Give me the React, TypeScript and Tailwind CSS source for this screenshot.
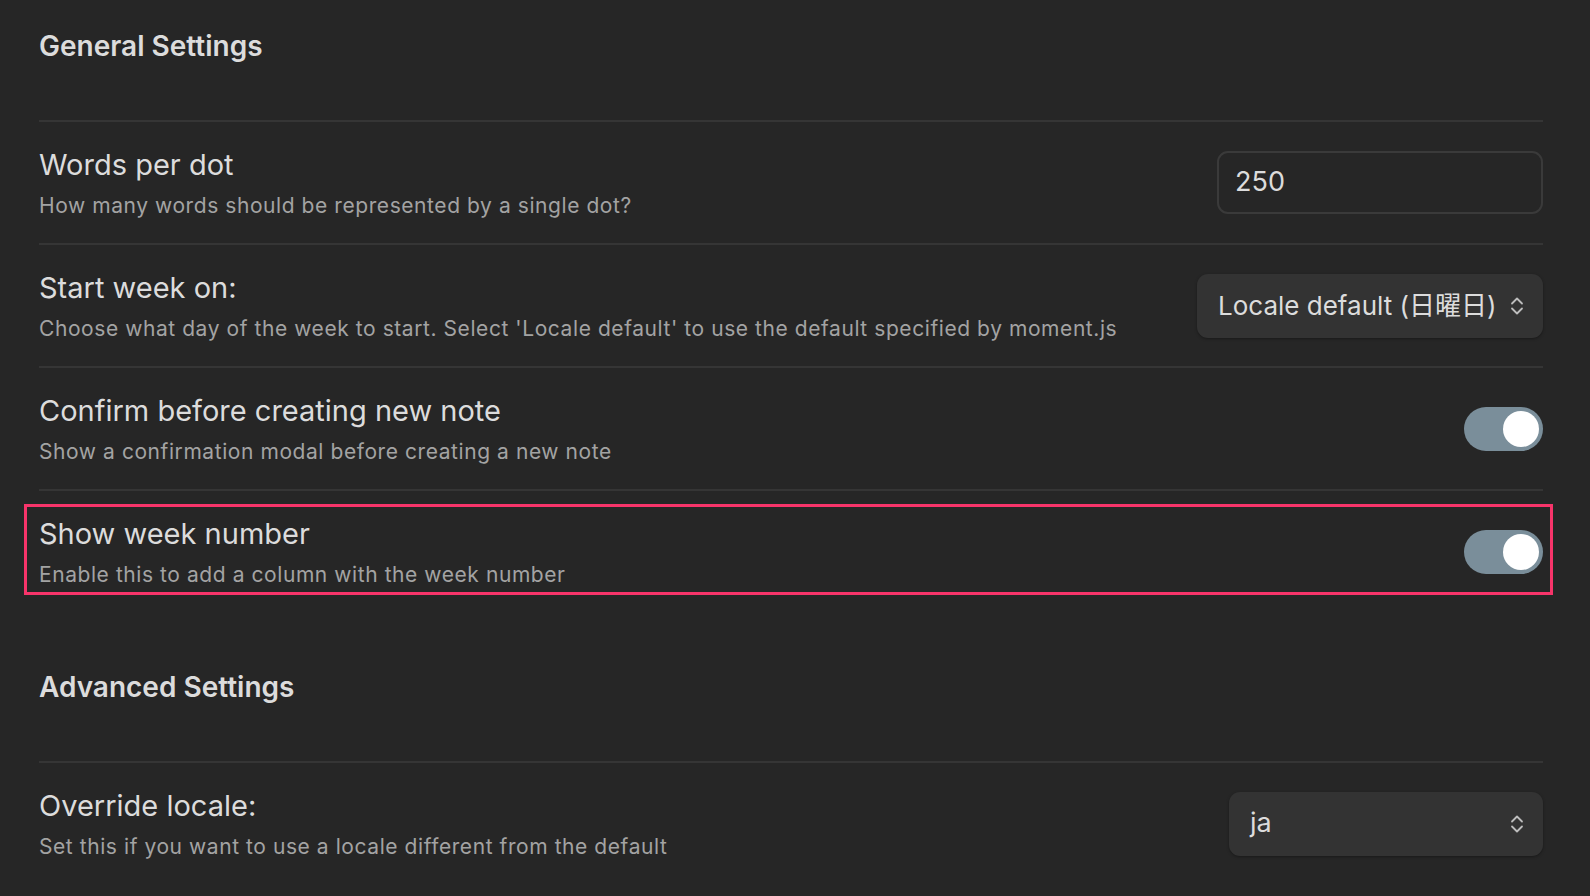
import React from "react";

const font = { fontFamily: "Inter, 'Noto Sans CJK JP', sans-serif" };

function Chevrons() {
  return (
    <svg width="14" height="20" viewBox="0 0 14 20" fill="none" stroke="#bdbdbd" strokeWidth="1.8" strokeLinecap="round" strokeLinejoin="round">
      <path d="M2 7.5 L7 2.5 L12 7.5" />
      <path d="M2 12.5 L7 17.5 L12 12.5" />
    </svg>
  );
}

function Toggle() {
  return (
    <div className="w-[79px] h-[44px] rounded-full bg-[#7a8e9a] flex items-center justify-end pr-[4px]">
      <div className="w-[36px] h-[36px] rounded-full bg-white" />
    </div>
  );
}

function Row({
  title,
  desc,
  control,
  highlight,
}: {
  title: string;
  desc: string;
  control: React.ReactNode;
  highlight?: boolean;
}) {
  return (
    <div className="relative flex items-center justify-between h-[123px] border-t-2 border-[#353535]">
      <div className="flex flex-col pt-[2px]">
        <div className="text-[29px] leading-[36px] text-[#dcdcdc]">{title}</div>
        <div className="mt-[8px] text-[21px] leading-[30px] tracking-[0.57px] text-[#a3a3a3]">{desc}</div>
      </div>
      {control}
      {highlight && (
        <div className="absolute top-[13px] left-[-15px] right-[-10px] h-[91px] border-[3px] border-[#f7346a] pointer-events-none" />
      )}
    </div>
  );
}

function Heading({ children, first }: { children: React.ReactNode; first?: boolean }) {
  return (
    <div className={first ? "pt-[28px] pb-[56px]" : "pt-[57px] pb-[56px]"}>
      <div className="text-[28px] leading-[36px] font-semibold text-[#dcdcdc]">{children}</div>
    </div>
  );
}

export default function App() {
  return (
    <div className="w-[1590px] h-[896px] overflow-hidden bg-[#262626] pl-[39px] pr-[47px]" style={font}>
      <Heading first>General Settings</Heading>
      <Row
        title="Words per dot"
        desc="How many words should be represented by a single dot?"
        control={
          <div className="w-[326px] h-[63px] rounded-[11px] border-2 border-[#3a3a3a] flex items-center pl-[16px] text-[27px] text-[#dcdcdc]">
            250
          </div>
        }
      />
      <Row
        title="Start week on:"
        desc="Choose what day of the week to start. Select 'Locale default' to use the default specified by moment.js"
        control={
          <div className="w-[346px] h-[64px] rounded-[11px] bg-[#333333] shadow-[0_1px_3px_rgba(0,0,0,0.35)] flex items-center justify-between pl-[21px] pr-[19px] text-[26px] text-[#dcdcdc]">
            <span>Locale default (日曜日)</span>
            <Chevrons />
          </div>
        }
      />
      <Row
        title="Confirm before creating new note"
        desc="Show a confirmation modal before creating a new note"
        control={<Toggle />}
      />
      <Row
        title="Show week number"
        desc="Enable this to add a column with the week number"
        control={<Toggle />}
        highlight
      />
      <Heading>Advanced Settings</Heading>
      <Row
        title="Override locale:"
        desc="Set this if you want to use a locale different from the default"
        control={
          <div className="w-[314px] h-[64px] rounded-[11px] bg-[#333333] shadow-[0_1px_3px_rgba(0,0,0,0.35)] flex items-center justify-between pl-[21px] pr-[19px] text-[27px] text-[#dcdcdc]">
            <span>ja</span>
            <Chevrons />
          </div>
        }
      />
    </div>
  );
}
